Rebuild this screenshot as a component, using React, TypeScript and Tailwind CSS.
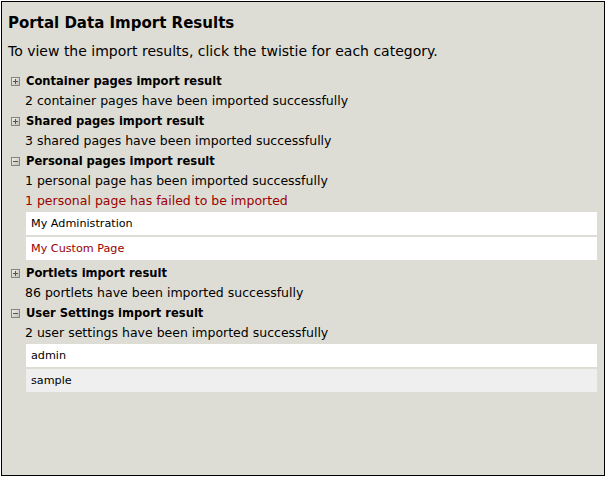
import React from 'react';

function Twistie({ open }: { open: boolean }) {
    const id = open ? 'tg-o' : 'tg-c';
    return (
        <svg width="9" height="9" viewBox="0 0 9 9" className="shrink-0">
            <defs>
                <linearGradient id={id} x1="0" y1="0" x2="1" y2="1">
                    <stop offset="0" stopColor="#f4f4f0" />
                    <stop offset="1" stopColor="#bdbbb2" />
                </linearGradient>
            </defs>
            <rect x="0.5" y="0.5" width="8" height="8" fill={`url(#${id})`} stroke="#85837c" />
            <rect x="2" y="4" width="5" height="1" fill="#55544f" />
            {!open && <rect x="4" y="2" width="1" height="5" fill="#55544f" />}
        </svg>
    );
}

type Section = {
    title: string;
    open: boolean;
    lines: { text: string; error?: boolean }[];
    rows?: { text: string; error?: boolean; alt?: boolean }[];
};

const sections: Section[] = [
    { title: 'Container pages import result', open: false, lines: [{ text: '2 container pages have been imported successfully' }] },
    { title: 'Shared pages import result', open: false, lines: [{ text: '3 shared pages have been imported successfully' }] },
    {
        title: 'Personal pages import result',
        open: true,
        lines: [
            { text: '1 personal page has been imported successfully' },
            { text: '1 personal page has failed to be imported', error: true },
        ],
        rows: [{ text: 'My Administration' }, { text: 'My Custom Page', error: true }],
    },
    { title: 'Portlets import result', open: false, lines: [{ text: '86 portlets have been imported successfully' }] },
    {
        title: 'User Settings import result',
        open: true,
        lines: [{ text: '2 user settings have been imported successfully' }],
        rows: [{ text: 'admin' }, { text: 'sample', alt: true }],
    },
];

const condensed = { fontFamily: '"DejaVu Sans Condensed", "DejaVu Sans", sans-serif' };

export default function App() {
    return (
        <div className="bg-white w-[606px] h-[478px] pt-px pl-px" style={{ fontFamily: '"DejaVu Sans", Verdana, sans-serif' }}>
            <div className="w-[604px] h-[475px] border border-black bg-[#deddd5] text-black">
                <h1 className="text-[16.7px] font-bold leading-5 px-[6px] pt-[10px]" style={condensed}>
                    Portal Data Import Results
                </h1>
                <p className="text-[14px] leading-5 px-[6px] mt-[9px]">
                    To view the import results, click the twistie for each category.
                </p>
                <div className="mt-[11px]">
                    {sections.map((s) => (
                        <div key={s.title}>
                            <div className="flex items-center h-5 pb-[2px] pl-[9px] gap-[6px]">
                                <Twistie open={s.open} />
                                <span className="text-[12.8px] font-bold" style={condensed}>
                                    {s.title}
                                </span>
                            </div>
                            {s.lines.map((l) => (
                                <div
                                    key={l.text}
                                    className={`h-5 leading-[18px] pl-[23px] text-[12.5px] ${l.error ? 'text-[#990000]' : ''}`}
                                >
                                    {l.text}
                                </div>
                            ))}
                            {s.rows && (
                                <div className="ml-[24px] mr-[7px] mb-[4px] flex flex-col gap-[2px]">
                                    {s.rows.map((r) => (
                                        <div
                                            key={r.text}
                                            className={`h-[23px] leading-[23px] pl-[5px] text-[11.2px] ${
                                                r.alt ? 'bg-[#efefef]' : 'bg-white'
                                            } ${r.error ? 'text-[#990000]' : ''}`}
                                        >
                                            {r.text}
                                        </div>
                                    ))}
                                </div>
                            )}
                        </div>
                    ))}
                </div>
            </div>
        </div>
    );
}
